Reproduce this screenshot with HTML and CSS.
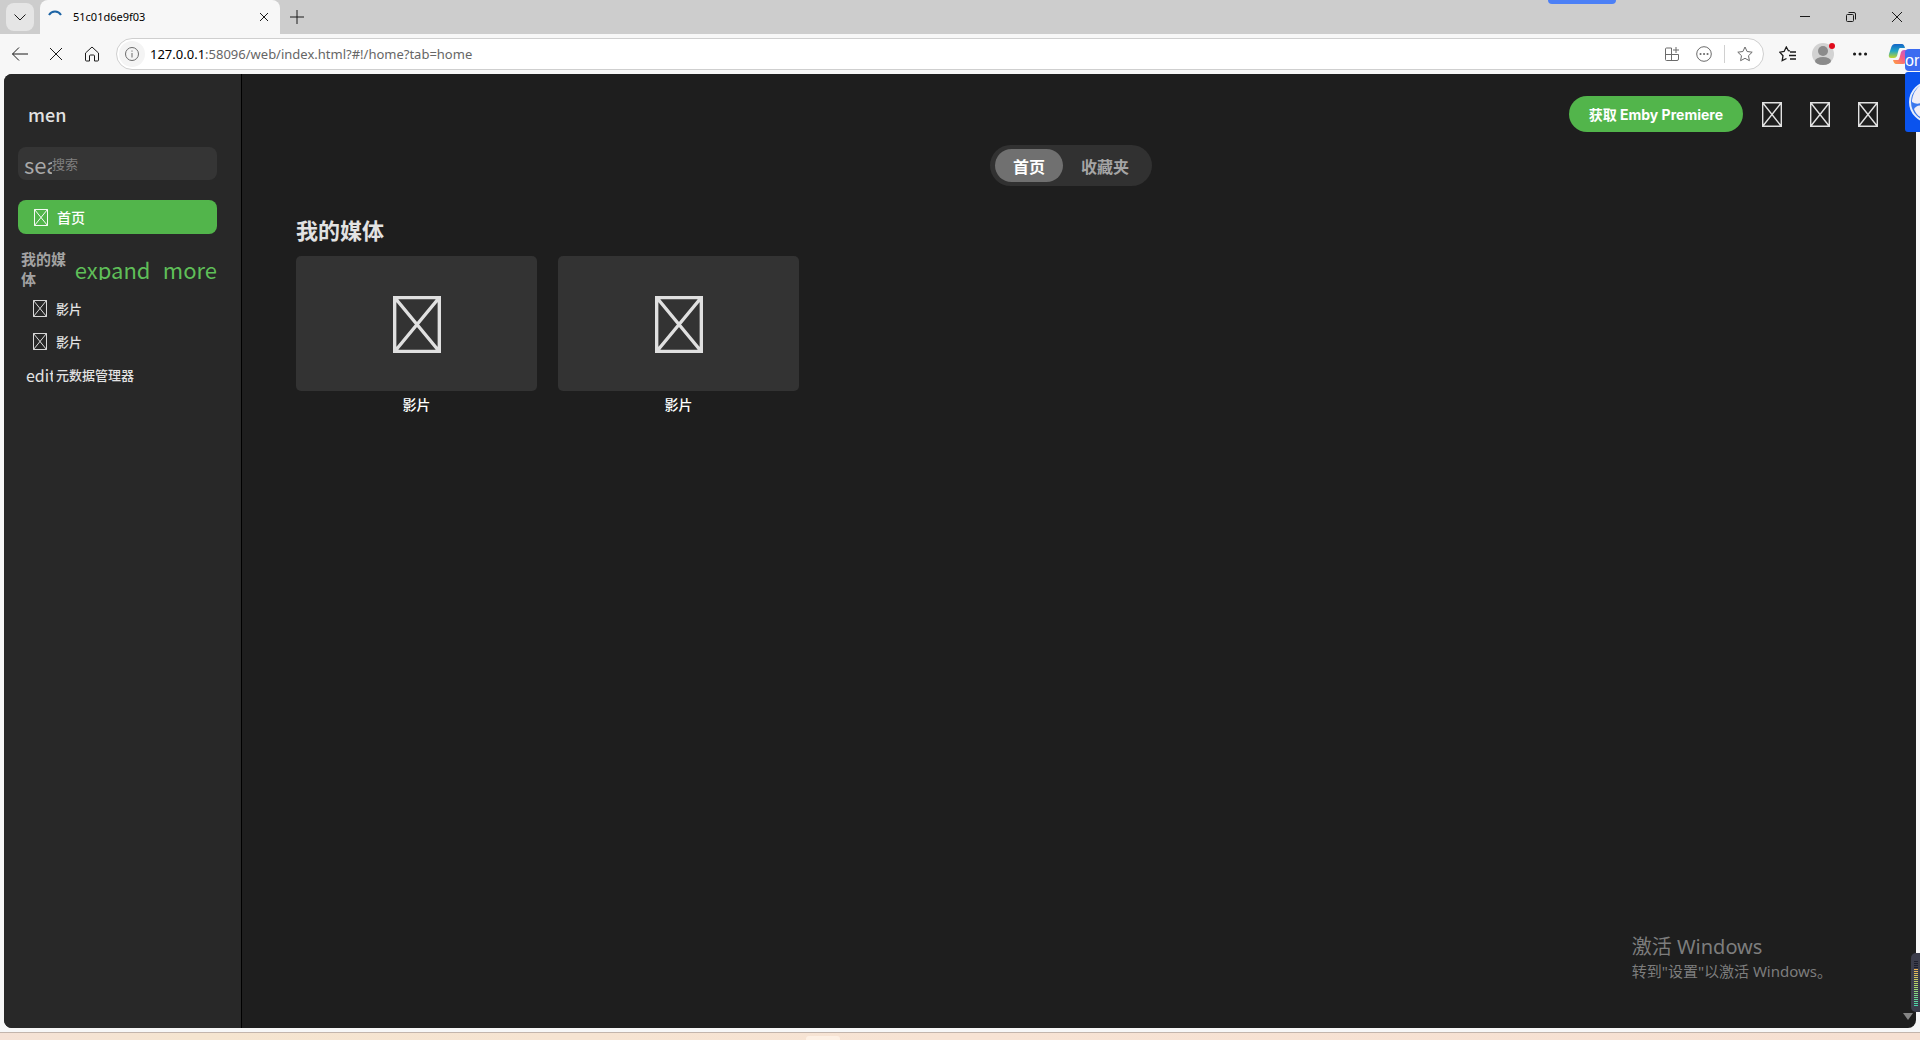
FILE: index.html
```html
<!DOCTYPE html>
<html lang="zh-CN">
<head>
  <meta charset="UTF-8" />
  <meta name="viewport" content="width=device-width, initial-scale=1" />
  <title>Emby</title>
  <link rel="stylesheet" href="styles.css">
</head>
<body>

  <svg class="defs" aria-hidden="true">
    <symbol id="missing" viewBox="0 0 20 25" preserveAspectRatio="none">
      <path d="M.7 .7H19.300V24.300H.7ZM.7 .7L19.300 24.300M19.300 .7L.7 24.300" fill="none" stroke="currentColor" stroke-width="1.400" />
    </symbol>
  </svg>

  <!-- Tab strip -->
  <header class="titlebar">
    <button class="tab-menu" aria-label="Tab actions">
      <svg width="14" height="14" viewBox="0 0 14 14"><path d="M1.500 4.500L7 10L12.500 4.500" /></svg>
    </button>
    <div class="tab">
      <svg class="spinner" width="14" height="14" viewBox="0 0 14 14"><path d="M1 5A7 7 0 0 1 13 5" /></svg>
      <span class="tab-title">51c01d6e9f03</span>
      <button class="tab-close" aria-label="Close tab">
        <svg width="10" height="10" viewBox="0 0 10 10"><path d="M1 1L9 9M9 1L1 9" /></svg>
      </button>
    </div>
    <button class="new-tab" aria-label="New tab">
      <svg width="14" height="14" viewBox="0 0 14 14"><path d="M7 0V14M0 7H14" /></svg>
    </button>
    <div class="window-buttons">
      <button aria-label="Minimize"><svg width="12" height="12" viewBox="0 0 12 12"><path d="M1 5.500H11" /></svg></button>
      <button aria-label="Restore"><svg width="12" height="12" viewBox="0 0 12 12"><rect x="1.500" y="3.500" width="7" height="7" rx="1" /><path d="M3.500 1.500H9Q10.500 1.500 10.500 3V8.500" /></svg></button>
      <button aria-label="Close"><svg width="12" height="12" viewBox="0 0 12 12"><path d="M1 1L11 11M11 1L1 11" /></svg></button>
    </div>
  </header>

  <!-- Address bar -->
  <div class="toolbar">
    <button aria-label="Back"><svg width="18" height="16" viewBox="0 0 18 16"><path d="M17 8H1.500M8 1.500L1.500 8L8 14.500" /></svg></button>
    <button aria-label="Stop"><svg width="14" height="14" viewBox="0 0 14 14"><path d="M1 1L13 13M13 1L1 13" /></svg></button>
    <button aria-label="Home"><svg width="16" height="16" viewBox="0 0 16 16"><path d="M1.500 7L8 1L14.500 7V14Q14.500 15 13.500 15H10.500V10Q10.500 9 9.500 9H6.500Q5.500 9 5.500 10V15H2.500Q1.500 15 1.500 14Z" /></svg></button>
    <div class="address">
      <button class="site-info" aria-label="Site information">
        <svg width="16" height="16" viewBox="0 0 16 16"><circle cx="8" cy="8" r="6.500" /><path d="M8 7V11.500M8 4.500V5.700" /></svg>
      </button>
      <p class="url"><b>127.0.0.1</b>:58096/web/index.html?#!/home?tab=home</p>
      <button aria-label="Install app"><svg width="16" height="16" viewBox="0 0 16 16"><path d="M7.500 2H2.500Q1.500 2 1.500 3V13.500Q1.500 14.500 2.500 14.500H13Q14.500 14.500 14.500 13V8.500H1.500M7.500 2V14.500M12 1V7M9 4H15" /></svg></button>
      <button aria-label="More actions"><svg width="16" height="16" viewBox="0 0 16 16"><circle cx="8" cy="8" r="7.300" /><path class="dots" d="M4.500 8h.1M8 8h.1M11.500 8h.1" /></svg></button>
      <span class="divider"></span>
      <button aria-label="Add to favorites"><svg width="16" height="16" viewBox="0 0 16 16"><path d="M8 1L10.100 5.500L15.200 6.200L11.500 9.700L12.400 14.700L8 12.300L3.600 14.700L4.500 9.700L.8 6.200L5.900 5.500Z" /></svg></button>
    </div>
    <button aria-label="Favorites"><svg class="bold" width="18" height="16" viewBox="0 0 18 16"><path d="M11 4.900L9.400 4.700L7.300 1L5.100 5.500L.8 6.200L4 9.700L3.200 14.700L7.500 12.500M11 6H17M10 9.500H17M11 13H17" /></svg></button>
    <button class="avatar" aria-label="Profile">
      <svg width="24" height="24" viewBox="0 0 24 24"><circle cx="11" cy="12" r="11" fill="#d2d2d2" /><circle cx="11" cy="9" r="5" fill="#8b8b8b" /><ellipse cx="11" cy="19" rx="8" ry="4" fill="#8b8b8b" /><circle cx="20" cy="4" r="3" fill="#e00b1c" /></svg>
    </button>
    <button aria-label="Settings and more"><svg width="16" height="16" viewBox="0 0 16 16"><path class="dots big" d="M2.500 8h.1M8 8h.1M13.500 8h.1" /></svg></button>
    <button class="copilot" aria-label="Copilot">
      <svg width="22" height="22" viewBox="0 0 22 22">
        <defs>
          <linearGradient id="cool" x1="0" y1="0" x2="0" y2="1"><stop offset="0" stop-color="#1464c8" /><stop offset=".5" stop-color="#22a6c4" /><stop offset="1" stop-color="#c4d72c" /></linearGradient>
          <linearGradient id="warm" x1="1" y1="0" x2="0" y2="1"><stop offset="0" stop-color="#b157e8" /><stop offset=".5" stop-color="#f75c86" /><stop offset="1" stop-color="#ffa43c" /></linearGradient>
        </defs>
        <path d="M7 1H14Q16 1 17 5L12 5Q11 5 10 9L9 13Q8 15 6 15H3Q0 15 1 11L3 5Q4 1 7 1Z" fill="url(#cool)" />
        <path d="M15 21H8Q6 21 5 17L10 17Q11 17 12 13L13 9Q14 7 16 7H19Q22 7 21 11L19 17Q18 21 15 21Z" fill="url(#warm)" />
      </svg>
    </button>
  </div>

  <!-- Emby page -->
  <div class="app">
    <nav class="sidebar">
      <button class="menu-button">men</button>
      <div class="search">
        <label for="search">search</label>
        <input id="search" type="text" placeholder="搜索">
      </div>
      <a class="nav-item active" href="#home"><svg class="missing"><use href="#missing" /></svg>首页</a>
      <div class="nav-section">
        <h2>我的媒体</h2>
        <button class="expand">expand_more</button>
      </div>
      <a class="nav-item" href="#movies"><svg class="missing"><use href="#missing" /></svg>影片</a>
      <a class="nav-item" href="#movies2"><svg class="missing"><use href="#missing" /></svg>影片</a>
      <a class="nav-item" href="#metadata"><span class="edit-icon">edit</span>元数据管理器</a>
    </nav>

    <main class="content">
      <div class="actions">
        <button class="premiere">获取 Emby Premiere</button>
        <button class="action" aria-label="Cast"><svg><use href="#missing" /></svg></button>
        <button class="action" aria-label="User"><svg><use href="#missing" /></svg></button>
        <button class="action" aria-label="Settings"><svg><use href="#missing" /></svg></button>
      </div>
      <div class="tabs">
        <button class="selected">首页</button>
        <button>收藏夹</button>
      </div>
      <section class="library">
        <h1>我的媒体</h1>
        <div class="cards">
          <a class="card" href="#movies">
            <span class="card-image"><svg><use href="#missing" /></svg></span>
            影片
          </a>
          <a class="card" href="#movies2">
            <span class="card-image"><svg><use href="#missing" /></svg></span>
            影片
          </a>
        </div>
      </section>
    </main>
  </div>

  <div class="taskbar"><span></span></div>

  <!-- Desktop overlays -->
  <div class="watermark">
    <p class="watermark-title">激活 Windows</p>
    <p>转到"设置"以激活 Windows。</p>
  </div>
  <div class="top-handle"></div>
  <div class="side-widget">
    <span class="side-label">or</span>
    <div class="side-logo">
      <svg width="40" height="44" viewBox="0 0 40 44"><circle cx="21" cy="22" r="20" fill="#3b78ee" stroke="#e6edfb" stroke-width="2" /><path d="M3 20Q5 8 15 3V21Q9 26 3 22Z" fill="#f1eef6" /><path d="M5 29Q9 23 15 27V38Q8 37 5 29Z" fill="#f1eef6" /></svg>
    </div>
  </div>
  <div class="scroll-arrow"></div>
  <div class="meter"><span></span></div>

</body>
</html>
```

FILE: styles.css
```css
* {
  box-sizing: border-box;
}

body {
  display: flex;
  flex-direction: column;
  height: 100vh;
  margin: 0;
  overflow: hidden;
  position: relative;
  background: #f7f7f7;
  font-family: "Noto Sans", "Noto Sans CJK SC", sans-serif;
  font-size: 14px;
}

h1, h2, p {
  margin: 0;
}

a {
  color: inherit;
  text-decoration: none;
}

button {
  display: flex;
  align-items: center;
  justify-content: center;
  padding: 0;
  border: none;
  background: none;
  color: inherit;
  font: inherit;
  cursor: pointer;
}

.defs {
  position: absolute;
  width: 0;
  height: 0;
}

/* Browser */
.titlebar {
  display: flex;
  align-items: center;
  height: 34px;
  flex-shrink: 0;
  padding-left: 6px;
  background: #cdcdcd;
}

.titlebar svg, .toolbar svg {
  fill: none;
  stroke: #1b1b1b;
}

.tab-menu {
  width: 28px;
  height: 28px;
  margin-right: 6px;
  border-radius: 8px;
  background: #e5e5e5;
}

.tab {
  display: flex;
  align-items: center;
  align-self: stretch;
  width: 240px;
  padding: 0 8px;
  border-radius: 8px 8px 0 0;
  background: #f7f7f7;
}

.titlebar .spinner {
  stroke: #1d64a5;
  stroke-width: 2;
}

.tab-title {
  flex: 1;
  padding-left: 11px;
  font-size: 11px;
  line-height: 30px;
}

.tab-close {
  width: 16px;
  height: 24px;
}

.new-tab {
  width: 34px;
  height: 28px;
}

.window-buttons {
  display: flex;
  margin-left: auto;
}

.window-buttons button {
  width: 46px;
  height: 34px;
}

.toolbar {
  display: flex;
  align-items: center;
  height: 40px;
  flex-shrink: 0;
  padding-left: 2px;
  background: #f7f7f7;
}

.toolbar > button {
  width: 36px;
  height: 32px;
}

.toolbar > .copilot {
  width: 42px;
}

.address {
  display: flex;
  align-items: center;
  flex: 1;
  height: 32px;
  margin: 0 6px;
  padding: 0 2px;
  border: 1px solid #cfcfcf;
  border-radius: 16px;
  background: #fff;
}

.address button {
  width: 32px;
  height: 26px;
}

.address .site-info {
  width: 26px;
  border-radius: 13px;
  background: #f4f4f4;
}

.address svg {
  stroke: #6b6b6b;
}

.url {
  flex: 1;
  padding-left: 5px;
  color: #666;
  font-size: 13px;
}

.url b {
  color: #000;
  font-weight: 400;
}

.divider {
  width: 1px;
  height: 18px;
  margin: 0 4px;
  background: #d0d0d0;
}

.toolbar .bold {
  stroke-width: 1.3;
}

.toolbar .dots {
  stroke-width: 2;
  stroke-linecap: round;
}

.toolbar .big {
  stroke-width: 3;
}

.toolbar .avatar svg, .toolbar .copilot svg {
  stroke: none;
}

/* App shell */
.app {
  display: flex;
  flex: 1;
  margin: 0 4px 4px;
  border-radius: 8px;
  overflow: hidden;
  background: #1e1e1e;
  color: #e2e2e2;
}

.sidebar {
  width: 238px;
  flex-shrink: 0;
  padding: 24px 24px 0 14px;
  border-right: 1px solid #000;
  background: #282828;
  font-family: "Noto Sans CJK SC", sans-serif;
  font-size: 13px;
}

.menu-button {
  height: 32px;
  padding-left: 10px;
  font-size: 18px;
  font-weight: 500;
}

.search {
  display: flex;
  align-items: center;
  height: 33px;
  margin-top: 17px;
  padding-left: 6px;
  border-radius: 8px;
  background: #353535;
}

.search label {
  width: 28px;
  overflow: hidden;
  color: #a9a9a9;
  font-size: 22px;
  line-height: 32px;
}

.search input {
  flex: 1;
  min-width: 0;
  padding: 0;
  border: none;
  outline: none;
  background: none;
  color: #e2e2e2;
  font: inherit;
}

.search input::placeholder {
  color: #808080;
}

.nav-item {
  display: flex;
  align-items: center;
  height: 33px;
  padding-left: 15px;
  font-weight: 500;
}

.nav-item .missing {
  width: 14px;
  height: 17px;
  margin-right: 9px;
}

.nav-item.active {
  height: 34px;
  margin-top: 20px;
  padding-left: 16px;
  border-radius: 8px;
  background: #52b54b;
  color: #fff;
  font-size: 14px;
}

.nav-section {
  display: flex;
  align-items: center;
  height: 58px;
  padding: 11px 0 0 3px;
}

.nav-section h2 {
  flex: 1;
  color: #a3a3a3;
  font-size: 15px;
  line-height: 20px;
}

/* cuts the descenders, so the underscore stays hidden */
.expand {
  height: 22px;
  margin-left: 4px;
  overflow: hidden;
  color: #5fbf58;
  font-size: 22px;
  line-height: 26px;
}

.edit-icon {
  width: 27px;
  margin: 0 3px 0 -7px;
  overflow: hidden;
  font-size: 16px;
  font-weight: 400;
}

.content {
  flex: 1;
  padding: 16px 16px 0 0;
}

.actions {
  display: flex;
  align-items: center;
  justify-content: flex-end;
  height: 48px;
  padding-right: 8px;
}

.premiere {
  height: 36px;
  margin-right: 5px;
  padding: 0 20px;
  border-radius: 18px;
  background: #52b54b;
  color: #fff;
  font-family: Inter, "Noto Sans CJK SC", sans-serif;
  font-weight: 700;
}

.action {
  width: 48px;
  height: 48px;
}

.action svg {
  width: 20px;
  height: 25px;
}

.tabs {
  display: flex;
  width: fit-content;
  margin: 7px auto 0;
  padding: 4px 5px;
  border-radius: 21px;
  background: #313131;
}

.tabs button {
  height: 33px;
  padding: 0 18px;
  border-radius: 17px;
  color: #a5a5a5;
  font-size: 16px;
  font-weight: 700;
}

.tabs .selected {
  background: #707070;
  color: #fff;
}

.library {
  margin-top: 29px;
  padding-left: 54px;
}

h1 {
  font-size: 22px;
  line-height: 30px;
}

.cards {
  display: flex;
  gap: 21px;
  margin-top: 11px;
}

.card {
  width: 241px;
  color: #fff;
  font-weight: 500;
  line-height: 28px;
  text-align: center;
}

.card-image {
  display: flex;
  align-items: center;
  justify-content: center;
  aspect-ratio: 241 / 135;
  padding-top: 2px;
  border-radius: 5px;
  background: #333;
  color: #e0e0e0;
}

.card-image svg {
  width: 48px;
  height: 57px;
}

.taskbar {
  height: 8px;
  flex-shrink: 0;
  border-top: 1px solid #c3b5ac;
  background: linear-gradient(90deg, #f5e2d6, #f5e5d0 10%, #f7e3d4 50%, #f6e0d2);
}

.taskbar span {
  display: block;
  width: 34px;
  height: 4px;
  margin: 3px 0 0 42%;
  border-radius: 3px 3px 0 0;
  background: #fdf0e4;
}

/* Things floating over the browser window */
.watermark {
  position: absolute;
  right: 88px;
  bottom: 57px;
  color: #7d7d7d;
  font-size: 15px;
  line-height: 24px;
}

.watermark-title {
  font-size: 20px;
}

.top-handle {
  position: absolute;
  top: 0;
  right: 304px;
  width: 68px;
  height: 4px;
  border-radius: 0 0 6px 6px;
  background: #4c80f6;
}

.side-widget {
  position: absolute;
  top: 49px;
  right: 0;
  width: 15px;
  overflow: hidden;
}

.side-label {
  display: block;
  height: 22px;
  margin-bottom: 1px;
  border-radius: 4px 0 0 4px;
  background: #3c6bf0;
  color: #fff;
  font-family: "Liberation Sans", sans-serif;
  font-size: 16px;
  line-height: 24px;
}

.side-logo {
  height: 60px;
  padding: 8px 0 0 4px;
  border-radius: 3px 0 0 3px;
  background: #0a53ee;
}

.scroll-arrow {
  position: absolute;
  right: 7px;
  bottom: 20px;
  border: 5px solid transparent;
  border-top: 7px solid #858585;
  border-bottom: none;
}

.meter {
  position: absolute;
  right: 0;
  bottom: 28px;
  width: 9px;
  height: 59px;
  padding: 8px 2px 0 3px;
  border-radius: 5px 0 0 5px;
  background: #3c3d4b;
}

.meter span {
  display: block;
  height: 45px;
  background:
    repeating-linear-gradient(transparent 0 1px, #3c3d4b 1px 2px),
    linear-gradient(#1d1e2c 0 8px, #f0b354 8px, #a9d96a 26px, #45d6ac);
}
```
